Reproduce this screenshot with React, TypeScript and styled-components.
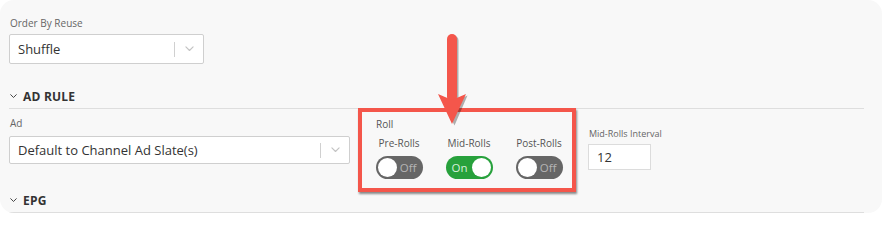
import React from "react";
import styled, { createGlobalStyle } from "styled-components";

const Global = createGlobalStyle`
  html, body { margin: 0; padding: 0; background: #ffffff; }
  body { font-family: "Open Sans", "Liberation Sans", sans-serif; }
  * { box-sizing: border-box; }
`;

const Panel = styled.div`
  width: 882px;
  height: 213px;
  background: #f8f8f8;
  border-radius: 14px;
  overflow: hidden;
  padding: 16px 18px 0 9px;
  display: flex;
  flex-direction: column;
`;

const Field = styled.div<{ $pt?: number }>`
  display: flex;
  flex-direction: column;
  padding-top: ${(p) => p.$pt ?? 0}px;
`;

const Label = styled.div<{ $gap?: number; $size?: number }>`
  font-size: ${(p) => p.$size ?? 10}px;
  line-height: 14px;
  color: #666;
  padding-left: 1px;
  margin-bottom: ${(p) => p.$gap ?? 4}px;
  white-space: nowrap;
`;

const SelectBox = styled.div<{ $w: number; $h: number }>`
  width: ${(p) => p.$w}px;
  height: ${(p) => p.$h}px;
  background: #fff;
  border: 1px solid #cfcfcf;
  border-radius: 2px;
  display: flex;
  align-items: center;
`;

const SelectValue = styled.div`
  flex: 1;
  padding-left: 8px;
  font-size: 13px;
  color: #333;
  white-space: nowrap;
`;

const Separator = styled.div`
  width: 1px;
  height: 15px;
  background: #d0d0d0;
`;

const Indicator = styled.div`
  width: 28px;
  display: flex;
  align-items: center;
  justify-content: center;
`;

const SectionHeader = styled.div<{ $mt: number }>`
  margin-top: ${(p) => p.$mt}px;
  height: 24px;
  flex-shrink: 0;
  border-bottom: 1px solid #dedede;
  display: flex;
  align-items: center;
  gap: 6px;
  padding-left: 1px;
  font-size: 12px;
  font-weight: 700;
  color: #333;
  letter-spacing: 0.2px;
`;

const Row = styled.div`
  display: flex;
  align-items: flex-start;
  padding-top: 7px;
`;

const RollGroup = styled.div`
  position: relative;
  margin-left: 14px;
  width: 210px;
  padding-top: 1px;
  display: flex;
  flex-direction: column;
`;

const RollLabel = styled.div`
  font-size: 10px;
  line-height: 14px;
  color: #555;
  padding-left: 12px;
  margin-bottom: 5px;
`;

const ToggleRow = styled.div`
  display: flex;
`;

const ToggleCol = styled.div`
  width: 70px;
  display: flex;
  flex-direction: column;
  align-items: center;
  gap: 6px;
`;

const ToggleLabel = styled.div`
  font-size: 10px;
  line-height: 14px;
  color: #555;
  white-space: nowrap;
`;

const Track = styled.div<{ $on: boolean }>`
  position: relative;
  width: 47px;
  height: 23px;
  border-radius: 12px;
  background: ${(p) => (p.$on ? "#27a13c" : "#666666")};
  display: flex;
  align-items: center;
  justify-content: ${(p) => (p.$on ? "flex-start" : "flex-end")};
  padding: 0 6px;
  font-size: 11.5px;
  color: ${(p) => (p.$on ? "#d6efda" : "#b4b4b4")};
`;

const Knob = styled.div<{ $on: boolean }>`
  position: absolute;
  top: 2px;
  ${(p) => (p.$on ? "right: 2px;" : "left: 2px;")}
  width: 19px;
  height: 19px;
  border-radius: 50%;
  background: #fff;
`;

const Highlight = styled.div`
  position: absolute;
  top: -8px;
  left: -6px;
  width: 218px;
  height: 84px;
  border: 4px solid #f4564b;
  box-shadow: 1px 2px 2px rgba(0, 0, 0, 0.45);
  pointer-events: none;
`;

const Arrow = styled.svg`
  position: absolute;
  left: 73px;
  top: -82px;
  overflow: visible;
`;

const IntervalField = styled.div`
  margin-left: 14px;
  padding-top: 11px;
  display: flex;
  flex-direction: column;
`;

const InputBox = styled.div`
  width: 63px;
  height: 26px;
  background: #fff;
  border: 1px solid #dcdcdc;
  display: flex;
  align-items: center;
  padding-left: 8px;
  font-size: 13px;
  color: #333;
`;

const Chevron = ({ color = "#333", w = 7 }: { color?: string; w?: number }) => (
  <svg width={w} height={w * 0.6} viewBox="0 0 10 6">
    <path d="M1 1 L5 5 L9 1" fill="none" stroke={color} strokeWidth="1.3" strokeLinecap="round" strokeLinejoin="round" />
  </svg>
);

const Select = ({ value, w, h }: { value: string; w: number; h: number }) => (
  <SelectBox $w={w} $h={h}>
    <SelectValue>{value}</SelectValue>
    <Separator />
    <Indicator>
      <Chevron color="#c4c4c4" w={9} />
    </Indicator>
  </SelectBox>
);

const Toggle = ({ label, on }: { label: string; on: boolean }) => (
  <ToggleCol>
    <ToggleLabel>{label}</ToggleLabel>
    <Track $on={on}>
      {on ? "On" : "Off"}
      <Knob $on={on} />
    </Track>
  </ToggleCol>
);

export default function App() {
  return (
    <>
      <Global />
      <Panel>
        <Field>
          <Label>Order By Reuse</Label>
          <Select value="Shuffle" w={195} h={30} />
        </Field>
        <SectionHeader $mt={21}>
          <Chevron w={7} />
          AD RULE
        </SectionHeader>
        <Row>
          <Field>
            <Label $gap={6}>Ad</Label>
            <Select value="Default to Channel Ad Slate(s)" w={341} h={28} />
          </Field>
          <RollGroup>
            <RollLabel>Roll</RollLabel>
            <ToggleRow>
              <Toggle label="Pre-Rolls" on={false} />
              <Toggle label="Mid-Rolls" on={true} />
              <Toggle label="Post-Rolls" on={false} />
            </ToggleRow>
            <Highlight />
            <Arrow width="32" height="92" viewBox="0 0 32 92">
              <g transform="translate(1.5,1.5)" fill="rgba(0,0,0,0.3)">
                <rect x="10" y="0" width="10" height="68" rx="5" />
                <path d="M1 60 L16 66 L29 60 L16 90 Z" />
              </g>
              <g fill="#f4564b">
                <rect x="10" y="0" width="10" height="68" rx="5" />
                <path d="M1 60 L15 66 L29 60 L15 90 Z" />
              </g>
            </Arrow>
          </RollGroup>
          <IntervalField>
            <Label $gap={3} $size={9}>Mid-Rolls Interval</Label>
            <InputBox>12</InputBox>
          </IntervalField>
        </Row>
        <SectionHeader $mt={10}>
          <Chevron w={7} />
          EPG
        </SectionHeader>
      </Panel>
    </>
  );
}
